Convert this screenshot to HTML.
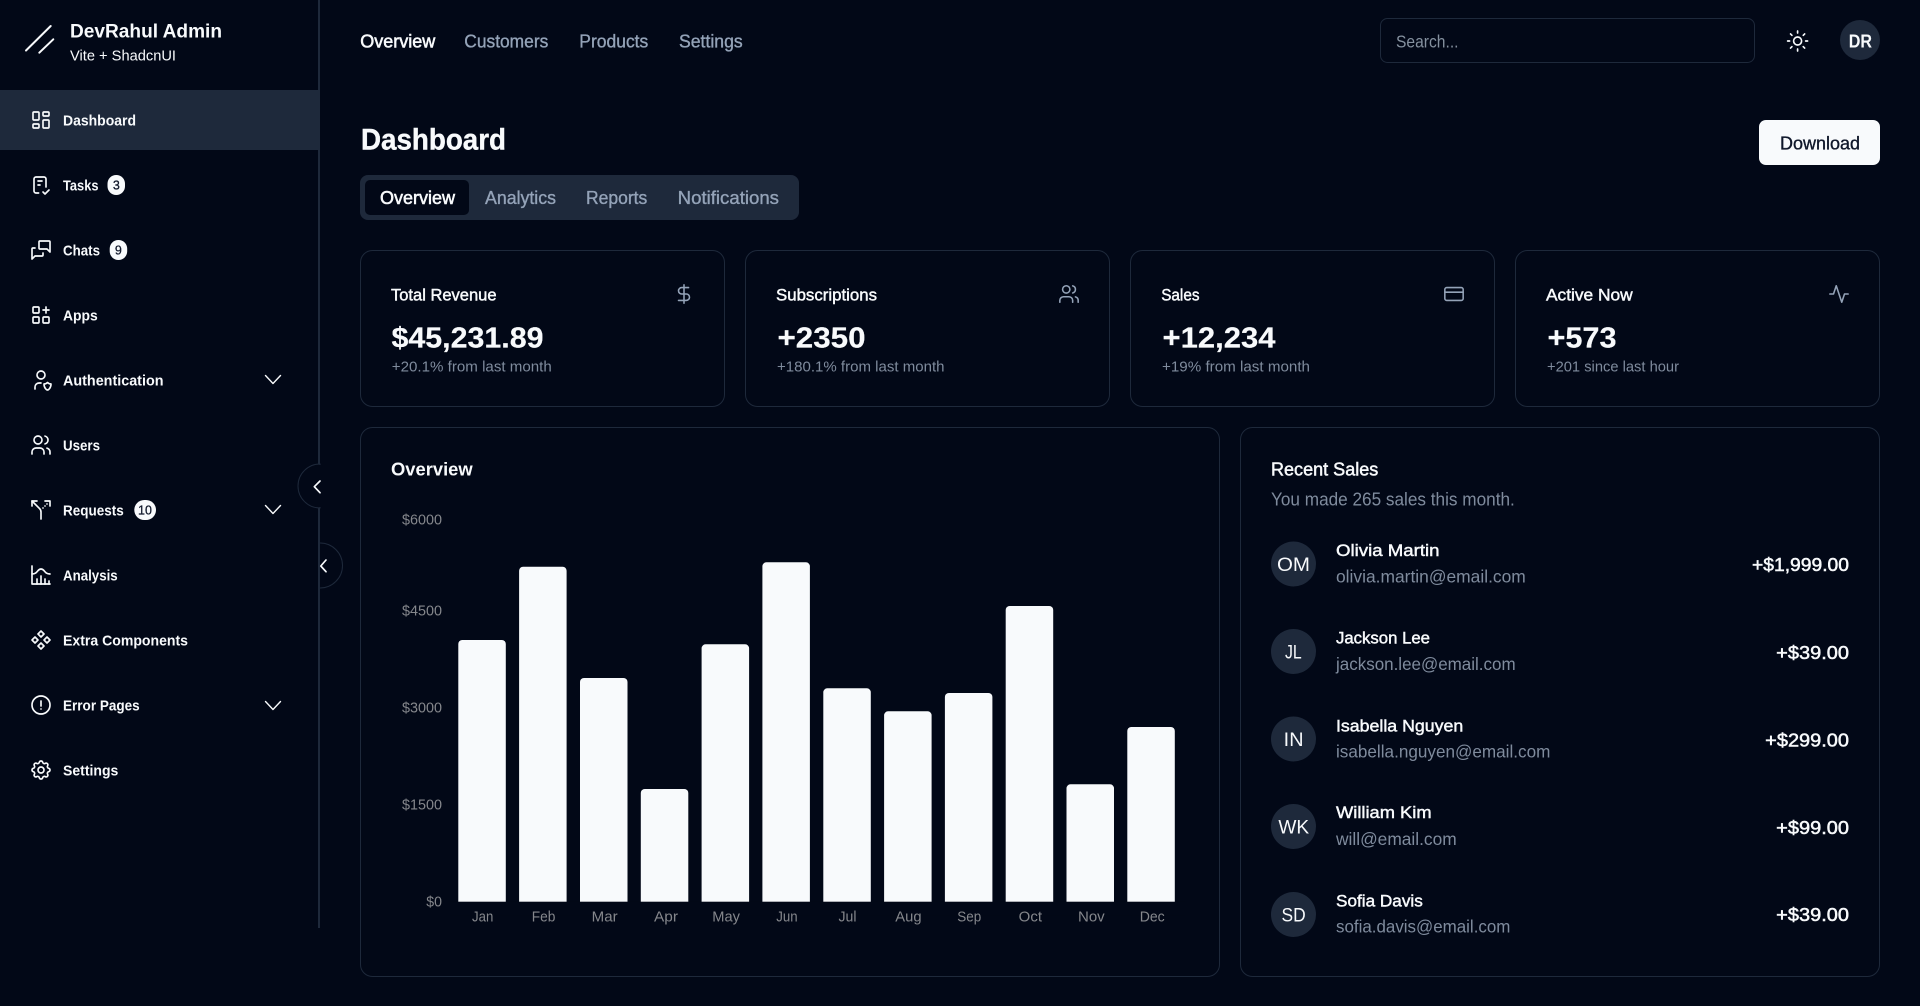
<!DOCTYPE html>
<html lang="en">
<head>
<meta charset="utf-8">
<title>Dashboard</title>
<style>
html,body{margin:0;padding:0;background:#020817;width:1920px;height:1006px;overflow:hidden}
svg{display:block;position:absolute;left:0;top:0}
text{font-family:"Liberation Sans",sans-serif;white-space:pre}
.nav{font-size:14.8px;font-weight:700;fill:#f8fafc}
.top{font-size:18px;fill:#94a3b8;stroke:#94a3b8;stroke-width:.35}
.topa{font-size:18px;fill:#f8fafc;stroke:#f8fafc;stroke-width:.55}
.st{font-size:17px;fill:#f8fafc;stroke:#f8fafc;stroke-width:.45}
.val{font-size:29px;font-weight:700;fill:#f8fafc;stroke:#f8fafc;stroke-width:.2}
.sub{font-size:14.8px;fill:#7f8b9d}
.ax{font-size:14.5px;fill:#85878c}
.name{font-size:17px;fill:#f8fafc;stroke:#f8fafc;stroke-width:.45}
.mail{font-size:17.3px;fill:#7f8b9d}
.amt{font-size:18px;fill:#f8fafc;stroke:#f8fafc;stroke-width:.5}
.ini{font-size:19.5px;fill:#f8fafc;text-anchor:start}
.bdg{font-size:12.5px;fill:#0f172a;stroke:#0f172a;stroke-width:.25;text-anchor:middle}
.ic{fill:none;stroke:#f8fafc;stroke-width:1.65;stroke-linecap:round;stroke-linejoin:round}
.ics{fill:none;stroke:#94a3b8;stroke-width:1.7;stroke-linecap:round;stroke-linejoin:round}
.card{fill:#020817;stroke:#1e293b;stroke-width:1}
.bar{fill:#f8fafc}
</style>
</head>
<body>
<svg xmlns="http://www.w3.org/2000/svg" width="1920" height="1006" viewBox="0 0 1920 1006">
<rect width="1920" height="1006" fill="#020817"/>

<!-- Sidebar -->
<rect x="318" y="0" width="2" height="928" fill="#1e293b"/>
<rect x="0" y="90" width="319" height="60" fill="#1e293b"/>
<g fill="none" stroke="#f8fafc" stroke-width="2" stroke-linecap="round">
<path d="M26 50.5L50.7 26"/><path d="M39.3 52.7L53.3 39.3"/>
</g>
<text x="70" y="37.5" font-size="19.5" font-weight="700" fill="#f8fafc" textLength="152" lengthAdjust="spacingAndGlyphs">DevRahul Admin</text>
<text x="70" y="60.5" font-size="15" fill="#f8fafc" textLength="106" lengthAdjust="spacingAndGlyphs">Vite + ShadcnUI</text>

<text class="nav" x="63" y="125.5" textLength="73" lengthAdjust="spacingAndGlyphs">Dashboard</text>
<text class="nav" x="63" y="190.5" textLength="35.5" lengthAdjust="spacingAndGlyphs">Tasks</text>
<text class="nav" x="63" y="255.5" textLength="37" lengthAdjust="spacingAndGlyphs">Chats</text>
<text class="nav" x="63" y="320.5" textLength="34.7" lengthAdjust="spacingAndGlyphs">Apps</text>
<text class="nav" x="63" y="385.5" textLength="100.5" lengthAdjust="spacingAndGlyphs">Authentication</text>
<text class="nav" x="63" y="450.5" textLength="37" lengthAdjust="spacingAndGlyphs">Users</text>
<text class="nav" x="63" y="515.5" textLength="60.7" lengthAdjust="spacingAndGlyphs">Requests</text>
<text class="nav" x="63" y="580.5" textLength="54.7" lengthAdjust="spacingAndGlyphs">Analysis</text>
<text class="nav" x="63" y="645.5" textLength="125" lengthAdjust="spacingAndGlyphs">Extra Components</text>
<text class="nav" x="63" y="710.5" textLength="76.7" lengthAdjust="spacingAndGlyphs">Error Pages</text>
<text class="nav" x="63" y="775.5" textLength="55.3" lengthAdjust="spacingAndGlyphs">Settings</text>

<!-- badges -->
<rect x="107.5" y="175" width="17.5" height="20" rx="8.7" fill="#f8fafc"/>
<text class="bdg" x="116.3" y="189.5">3</text>
<rect x="109.7" y="240" width="17.5" height="20" rx="8.7" fill="#f8fafc"/>
<text class="bdg" x="118.4" y="254.5">9</text>
<rect x="134.3" y="500" width="21.7" height="20" rx="10" fill="#f8fafc"/>
<text class="bdg" x="145" y="514.5">10</text>

<!-- nav icons (24px, centred on x=41) -->
<g class="ic" transform="translate(29 108)"><path d="M5 4h4a1 1 0 0 1 1 1v6a1 1 0 0 1 -1 1h-4a1 1 0 0 1 -1 -1v-6a1 1 0 0 1 1 -1"/><path d="M5 16h4a1 1 0 0 1 1 1v2a1 1 0 0 1 -1 1h-4a1 1 0 0 1 -1 -1v-2a1 1 0 0 1 1 -1"/><path d="M15 12h4a1 1 0 0 1 1 1v6a1 1 0 0 1 -1 1h-4a1 1 0 0 1 -1 -1v-6a1 1 0 0 1 1 -1"/><path d="M15 4h4a1 1 0 0 1 1 1v2a1 1 0 0 1 -1 1h-4a1 1 0 0 1 -1 -1v-2a1 1 0 0 1 1 -1"/></g>
<g class="ic" transform="translate(29 173)"><path d="M9.615 20h-2.615a2 2 0 0 1 -2 -2v-12a2 2 0 0 1 2 -2h8a2 2 0 0 1 2 2v8"/><path d="M14 19l2 2l4 -4"/><path d="M9 8h4"/><path d="M9 12h2"/></g>
<g class="ic" transform="translate(29 238)"><path d="M21 14l-3 -3h-7a1 1 0 0 1 -1 -1v-6a1 1 0 0 1 1 -1h9a1 1 0 0 1 1 1v10"/><path d="M14 15v2a1 1 0 0 1 -1 1h-7l-3 3v-10a1 1 0 0 1 1 -1h2"/></g>
<g class="ic" transform="translate(29 303)"><rect x="4" y="4" width="6" height="6" rx="1"/><rect x="4" y="14" width="6" height="6" rx="1"/><rect x="14" y="14" width="6" height="6" rx="1"/><path d="M14 7h6"/><path d="M17 4v6"/></g>
<g class="ic" transform="translate(29 368)"><path d="M6 21v-2a4 4 0 0 1 4 -4h2"/><path d="M22 16c0 4 -2.5 6 -3.5 6s-3.5 -2 -3.5 -6c1 0 2.5 -.5 3.5 -1.5c1 1 2.5 1.5 3.5 1.5z"/><path d="M8 7a4 4 0 1 0 8 0a4 4 0 0 0 -8 0"/></g>
<g class="ic" transform="translate(29 433)"><path d="M5 7a4 4 0 1 0 8 0a4 4 0 1 0 -8 0"/><path d="M3 21v-2a4 4 0 0 1 4 -4h4a4 4 0 0 1 4 4v2"/><path d="M16 3.13a4 4 0 0 1 0 7.75"/><path d="M21 21v-2a4 4 0 0 0 -3 -3.85"/></g>
<g class="ic" transform="translate(29 498)"><path d="M8 3h-5v5"/><path d="M16 3h5v5"/><path d="M3 3l7.536 7.536a5 5 0 0 1 1.464 3.534v6.93"/><path d="M18 6.01v-.01"/><path d="M16 8.02v-.01"/><path d="M14 10v.01"/></g>
<g class="ic" transform="translate(29 563)"><path d="M3 3v18h18"/><path d="M20 18v3"/><path d="M16 16v5"/><path d="M12 13v8"/><path d="M8 16v5"/><path d="M3 11c6 0 5 -5 9 -5s3 5 9 5"/></g>
<g class="ic" transform="translate(29 628)"><path d="M3 12l3 3l3 -3l-3 -3z"/><path d="M15 12l3 3l3 -3l-3 -3z"/><path d="M9 6l3 3l3 -3l-3 -3z"/><path d="M9 18l3 3l3 -3l-3 -3z"/></g>
<g class="ic" transform="translate(29 693)"><path d="M3 12a9 9 0 1 0 18 0a9 9 0 0 0 -18 0"/><path d="M12 8v5"/><path d="M12 16v.01"/></g>
<g class="ic" transform="translate(29 758)"><path d="M10.325 4.317c.426 -1.756 2.924 -1.756 3.35 0a1.724 1.724 0 0 0 2.573 1.066c1.543 -.94 3.31 .826 2.37 2.37a1.724 1.724 0 0 0 1.065 2.572c1.756 .426 1.756 2.924 0 3.35a1.724 1.724 0 0 0 -1.066 2.573c.94 1.543 -.826 3.31 -2.37 2.37a1.724 1.724 0 0 0 -2.572 1.065c-.426 1.756 -2.924 1.756 -3.35 0a1.724 1.724 0 0 0 -2.573 -1.066c-1.543 .94 -3.31 -.826 -2.37 -2.37a1.724 1.724 0 0 0 -1.065 -2.572c-1.756 -.426 -1.756 -2.924 0 -3.35a1.724 1.724 0 0 0 1.066 -2.573c-.94 -1.543 .826 -3.31 2.37 -2.37c1 .608 2.296 .07 2.572 -1.065z"/><path d="M9 12a3 3 0 1 0 6 0a3 3 0 0 0 -6 0"/></g>

<!-- chevrons -->
<g fill="none" stroke="#f8fafc" stroke-width="1.4" stroke-linecap="round" stroke-linejoin="round">
<path d="M265.5 375.5L273 383.5L280.5 375.5"/>
<path d="M265.5 505.5L273 513.5L280.5 505.5"/>
<path d="M265.5 701.5L273 709.5L280.5 701.5"/>
</g>

<!-- collapse buttons -->
<path d="M320 464A22 22 0 0 0 320 508Z" fill="#020817" stroke="#1e293b"/>
<rect x="318" y="465" width="2.5" height="42" fill="#020817"/>
<path d="M320 481L314.3 486.7L320 492.7" fill="none" stroke="#f8fafc" stroke-width="1.7" stroke-linecap="round" stroke-linejoin="round"/>
<path d="M320 543A22.5 22.5 0 0 1 320 588" fill="#020817" stroke="#1e293b"/>
<path d="M326 560L320.8 566L326 571.7" fill="none" stroke="#f8fafc" stroke-width="1.7" stroke-linecap="round" stroke-linejoin="round"/>

<!-- Top nav -->
<text class="topa" x="360.3" y="47.7" textLength="75" lengthAdjust="spacingAndGlyphs">Overview</text>
<text class="top" x="464.3" y="47.7" textLength="84" lengthAdjust="spacingAndGlyphs">Customers</text>
<text class="top" x="579.3" y="47.7" textLength="69" lengthAdjust="spacingAndGlyphs">Products</text>
<text class="top" x="679" y="47.7" textLength="63.7" lengthAdjust="spacingAndGlyphs">Settings</text>

<rect x="1380.5" y="18.5" width="374" height="44" rx="7" fill="#020817" stroke="#1e293b"/>
<text x="1396" y="47.5" font-size="17.8" fill="#85919f" textLength="62.5" lengthAdjust="spacingAndGlyphs">Search...</text>

<g class="ic" transform="translate(1785.6 29)"><circle cx="12" cy="12" r="4"/><path d="M12 2v2"/><path d="M12 20v2"/><path d="M4.93 4.93l1.41 1.41"/><path d="M17.66 17.66l1.41 1.41"/><path d="M2 12h2"/><path d="M20 12h2"/><path d="M6.34 17.66l-1.41 1.41"/><path d="M19.07 4.93l-1.41 1.41"/></g>

<circle cx="1860" cy="40" r="20" fill="#1e293b"/>
<text x="1848.7" y="47.7" font-size="18" font-weight="700" fill="#f8fafc" textLength="23.3" lengthAdjust="spacingAndGlyphs">DR</text>

<!-- Heading -->
<text x="361" y="149.5" font-size="30" font-weight="700" fill="#f8fafc" stroke="#f8fafc" stroke-width=".4" textLength="145" lengthAdjust="spacingAndGlyphs">Dashboard</text>
<rect x="1759" y="120" width="121" height="45" rx="7" fill="#f8fafc"/>
<text x="1780" y="149.5" font-size="18" fill="#0f172a" stroke="#0f172a" stroke-width=".35" textLength="80" lengthAdjust="spacingAndGlyphs">Download</text>

<!-- Tabs -->
<rect x="360" y="175" width="439" height="45" rx="8" fill="#1e293b"/>
<rect x="365" y="180" width="104" height="35" rx="5" fill="#020817"/>
<text class="topa" x="380" y="204" textLength="75" lengthAdjust="spacingAndGlyphs">Overview</text>
<text class="top" x="485" y="204" textLength="71" lengthAdjust="spacingAndGlyphs">Analytics</text>
<text class="top" x="586" y="204" textLength="61.3" lengthAdjust="spacingAndGlyphs">Reports</text>
<text class="top" x="677.7" y="204" textLength="101.3" lengthAdjust="spacingAndGlyphs">Notifications</text>

<!-- Stat cards -->
<rect class="card" x="360.5" y="250.5" width="364" height="156" rx="12"/>
<rect class="card" x="745.5" y="250.5" width="364" height="156" rx="12"/>
<rect class="card" x="1130.5" y="250.5" width="364" height="156" rx="12"/>
<rect class="card" x="1515.5" y="250.5" width="364" height="156" rx="12"/>

<text class="st" x="391" y="300.3" textLength="105.5" lengthAdjust="spacingAndGlyphs">Total Revenue</text>
<text class="st" x="776" y="300.3" textLength="101" lengthAdjust="spacingAndGlyphs">Subscriptions</text>
<text class="st" x="1161.2" y="300.3" textLength="38.3" lengthAdjust="spacingAndGlyphs">Sales</text>
<text class="st" x="1546" y="300.3" textLength="86.7" lengthAdjust="spacingAndGlyphs">Active Now</text>

<text class="val" x="391.5" y="347.7" textLength="152" lengthAdjust="spacingAndGlyphs">$45,231.89</text>
<text class="val" x="777.5" y="347.7" textLength="88" lengthAdjust="spacingAndGlyphs">+2350</text>
<text class="val" x="1162.5" y="347.7" textLength="113" lengthAdjust="spacingAndGlyphs">+12,234</text>
<text class="val" x="1547.5" y="347.7" textLength="69" lengthAdjust="spacingAndGlyphs">+573</text>

<text class="sub" x="391.8" y="371.5" textLength="160" lengthAdjust="spacingAndGlyphs">+20.1% from last month</text>
<text class="sub" x="777" y="371.5" textLength="167.5" lengthAdjust="spacingAndGlyphs">+180.1% from last month</text>
<text class="sub" x="1162" y="371.5" textLength="148" lengthAdjust="spacingAndGlyphs">+19% from last month</text>
<text class="sub" x="1547" y="371.5" textLength="132" lengthAdjust="spacingAndGlyphs">+201 since last hour</text>

<g class="ics" transform="translate(673 283) scale(.9167)"><path d="M12 2v20"/><path d="M17 5H9.5a3.5 3.5 0 0 0 0 7h5a3.5 3.5 0 0 1 0 7H6"/></g>
<g class="ics" transform="translate(1058 283) scale(.9167)"><path d="M16 21v-2a4 4 0 0 0-4-4H6a4 4 0 0 0-4 4v2"/><circle cx="9" cy="7" r="4"/><path d="M22 21v-2a4 4 0 0 0-3-3.87"/><path d="M16 3.13a4 4 0 0 1 0 7.75"/></g>
<g class="ics" transform="translate(1443 283) scale(.9167)"><rect x="2" y="5" width="20" height="14" rx="2"/><path d="M2 10h20"/></g>
<g class="ics" transform="translate(1828 283) scale(.9167)"><path d="M22 12h-4l-3 9L9 3l-3 9H2"/></g>

<!-- Overview chart -->
<rect class="card" x="360.5" y="427.5" width="859" height="549" rx="12"/>
<text x="391" y="475.5" font-size="18" font-weight="700" fill="#f8fafc" textLength="81.7" lengthAdjust="spacingAndGlyphs">Overview</text>

<text class="ax" x="402" y="524.3" textLength="40" lengthAdjust="spacingAndGlyphs">$6000</text>
<text class="ax" x="402" y="615.5" textLength="40" lengthAdjust="spacingAndGlyphs">$4500</text>
<text class="ax" x="402" y="712.7" textLength="40" lengthAdjust="spacingAndGlyphs">$3000</text>
<text class="ax" x="402" y="809.7" textLength="40" lengthAdjust="spacingAndGlyphs">$1500</text>
<text class="ax" x="426.3" y="906.5" textLength="15.7" lengthAdjust="spacingAndGlyphs">$0</text>

<rect class="bar" x="458.3" y="640" width="47.5" height="270" rx="4"/>
<rect class="bar" x="519.1" y="566.7" width="47.5" height="343" rx="4"/>
<rect class="bar" x="580" y="678" width="47.5" height="232" rx="4"/>
<rect class="bar" x="640.8" y="789" width="47.5" height="121" rx="4"/>
<rect class="bar" x="701.6" y="644.3" width="47.5" height="266" rx="4"/>
<rect class="bar" x="762.4" y="562.3" width="47.5" height="348" rx="4"/>
<rect class="bar" x="823.3" y="688.3" width="47.5" height="222" rx="4"/>
<rect class="bar" x="884.1" y="711.3" width="47.5" height="199" rx="4"/>
<rect class="bar" x="944.9" y="693" width="47.5" height="217" rx="4"/>
<rect class="bar" x="1005.7" y="606" width="47.5" height="304" rx="4"/>
<rect class="bar" x="1066.5" y="784.3" width="47.5" height="126" rx="4"/>
<rect class="bar" x="1127.3" y="727" width="47.5" height="183" rx="4"/>
<rect x="450" y="901.7" width="735" height="14" fill="#020817"/>

<text class="ax" x="472" y="921.3" textLength="21.3" lengthAdjust="spacingAndGlyphs">Jan</text>
<text class="ax" x="531.7" y="921.3" textLength="23.7" lengthAdjust="spacingAndGlyphs">Feb</text>
<text class="ax" x="591.7" y="921.3" textLength="26" lengthAdjust="spacingAndGlyphs">Mar</text>
<text class="ax" x="654" y="921.3" textLength="24" lengthAdjust="spacingAndGlyphs">Apr</text>
<text class="ax" x="712.3" y="921.3" textLength="27.7" lengthAdjust="spacingAndGlyphs">May</text>
<text class="ax" x="776.3" y="921.3" textLength="21.3" lengthAdjust="spacingAndGlyphs">Jun</text>
<text class="ax" x="838.5" y="921.3" textLength="18" lengthAdjust="spacingAndGlyphs">Jul</text>
<text class="ax" x="895.3" y="921.3" textLength="26.3" lengthAdjust="spacingAndGlyphs">Aug</text>
<text class="ax" x="957.3" y="921.3" textLength="24" lengthAdjust="spacingAndGlyphs">Sep</text>
<text class="ax" x="1018.7" y="921.3" textLength="23.3" lengthAdjust="spacingAndGlyphs">Oct</text>
<text class="ax" x="1078" y="921.3" textLength="26.7" lengthAdjust="spacingAndGlyphs">Nov</text>
<text class="ax" x="1139.7" y="921.3" textLength="25" lengthAdjust="spacingAndGlyphs">Dec</text>

<!-- Recent sales -->
<rect class="card" x="1240.5" y="427.5" width="639" height="549" rx="12"/>
<text x="1271" y="475.5" font-size="18.5" fill="#f8fafc" stroke="#f8fafc" stroke-width=".5" textLength="107.3" lengthAdjust="spacingAndGlyphs">Recent Sales</text>
<text x="1271" y="505.5" font-size="18" fill="#7f8b9d" textLength="243.8" lengthAdjust="spacingAndGlyphs">You made 265 sales this month.</text>

<circle cx="1293.5" cy="564" r="22.5" fill="#1e293b"/>
<circle cx="1293.5" cy="651.5" r="22.5" fill="#1e293b"/>
<circle cx="1293.5" cy="739" r="22.5" fill="#1e293b"/>
<circle cx="1293.5" cy="826.5" r="22.5" fill="#1e293b"/>
<circle cx="1293.5" cy="914.5" r="22.5" fill="#1e293b"/>

<text class="ini" x="1277" y="571" textLength="33" lengthAdjust="spacingAndGlyphs">OM</text>
<text class="ini" x="1285" y="658.5" textLength="16.7" lengthAdjust="spacingAndGlyphs">JL</text>
<text class="ini" x="1283.7" y="746" textLength="19.8" lengthAdjust="spacingAndGlyphs">IN</text>
<text class="ini" x="1278.4" y="833.5" textLength="30.8" lengthAdjust="spacingAndGlyphs">WK</text>
<text class="ini" x="1281.5" y="921.5" textLength="24.2" lengthAdjust="spacingAndGlyphs">SD</text>

<text class="name" x="1336" y="556" textLength="103.5" lengthAdjust="spacingAndGlyphs">Olivia Martin</text>
<text class="mail" x="1336" y="582.3" textLength="189.8" lengthAdjust="spacingAndGlyphs">olivia.martin@email.com</text>
<text class="amt" x="1752" y="571" textLength="97" lengthAdjust="spacingAndGlyphs">+$1,999.00</text>

<text class="name" x="1336" y="643.3" textLength="94" lengthAdjust="spacingAndGlyphs">Jackson Lee</text>
<text class="mail" x="1336" y="670" textLength="179.6" lengthAdjust="spacingAndGlyphs">jackson.lee@email.com</text>
<text class="amt" x="1776.2" y="659" textLength="72.8" lengthAdjust="spacingAndGlyphs">+$39.00</text>

<text class="name" x="1336" y="731.3" textLength="127.3" lengthAdjust="spacingAndGlyphs">Isabella Nguyen</text>
<text class="mail" x="1336" y="757.3" textLength="214.4" lengthAdjust="spacingAndGlyphs">isabella.nguyen@email.com</text>
<text class="amt" x="1765.2" y="746.5" textLength="83.8" lengthAdjust="spacingAndGlyphs">+$299.00</text>

<text class="name" x="1336" y="818" textLength="95.6" lengthAdjust="spacingAndGlyphs">William Kim</text>
<text class="mail" x="1336" y="845" textLength="120.7" lengthAdjust="spacingAndGlyphs">will@email.com</text>
<text class="amt" x="1776.2" y="834" textLength="72.8" lengthAdjust="spacingAndGlyphs">+$99.00</text>

<text class="name" x="1336" y="906.3" textLength="86.8" lengthAdjust="spacingAndGlyphs">Sofia Davis</text>
<text class="mail" x="1336" y="932.3" textLength="174.4" lengthAdjust="spacingAndGlyphs">sofia.davis@email.com</text>
<text class="amt" x="1776.2" y="921" textLength="72.8" lengthAdjust="spacingAndGlyphs">+$39.00</text>
</svg>
</body>
</html>
